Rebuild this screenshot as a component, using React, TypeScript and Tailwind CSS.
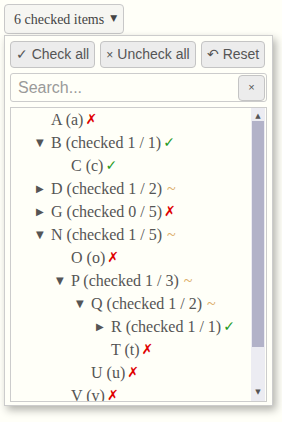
import React from "react";

type Node = {
  label: string;
  level: number;
  arrow?: "down" | "right";
  mark: "x" | "check" | "partial";
};

const rows: Node[] = [
  { label: "A (a)", level: 0, mark: "x" },
  { label: "B (checked 1 / 1)", level: 0, arrow: "down", mark: "check" },
  { label: "C (c)", level: 1, mark: "check" },
  { label: "D (checked 1 / 2)", level: 0, arrow: "right", mark: "partial" },
  { label: "G (checked 0 / 5)", level: 0, arrow: "right", mark: "x" },
  { label: "N (checked 1 / 5)", level: 0, arrow: "down", mark: "partial" },
  { label: "O (o)", level: 1, mark: "x" },
  { label: "P (checked 1 / 3)", level: 1, arrow: "down", mark: "partial" },
  { label: "Q (checked 1 / 2)", level: 2, arrow: "down", mark: "partial" },
  { label: "R (checked 1 / 1)", level: 3, arrow: "right", mark: "check" },
  { label: "T (t)", level: 3, mark: "x" },
  { label: "U (u)", level: 2, mark: "x" },
  { label: "V (v)", level: 1, mark: "x" },
];

const indent = ["pl-[25px]", "pl-[45px]", "pl-[65px]", "pl-[85px]"];

function Mark({ kind }: { kind: Node["mark"] }) {
  if (kind === "x") {
    return (
      <span className="ml-[2px] font-['DejaVu_Sans',sans-serif] text-[14px] font-bold text-[#e00000]">
        ✗
      </span>
    );
  }
  if (kind === "check") {
    return (
      <span className="ml-[2px] font-['DejaVu_Sans',sans-serif] text-[14px] font-bold text-[#1e9a1e]">
        ✓
      </span>
    );
  }
  return <span className="ml-[5px] text-[16px] text-[#dcae6a]">~</span>;
}

function Row({ node }: { node: Node }) {
  return (
    <div className={`flex h-[23px] items-center whitespace-nowrap ${indent[node.level]}`}>
      <span className="w-[15px] font-['DejaVu_Sans',sans-serif] text-[10px] text-[#555]">
        {node.arrow === "down" ? "▼" : node.arrow === "right" ? "▶" : ""}
      </span>
      <span>{node.label}</span>
      <Mark kind={node.mark} />
    </div>
  );
}

export default function App() {
  return (
    <div className="h-[422px] w-[282px] overflow-hidden bg-[#fffff8] pl-[4px] pt-[4px] font-['Liberation_Serif',serif] text-[#555]">
      <button className="flex h-[30px] items-center gap-[6px] rounded-[4px] border border-[#c8c8c8] bg-[#f6f6f2] pl-[9px] pr-[6px] text-[14px] text-[#444]">
        <span>6 checked items</span>
        <span className="font-['DejaVu_Sans',sans-serif] text-[9px]">▼</span>
      </button>

      <div className="mt-[1px] flex h-[371px] w-[269px] flex-col gap-[5px] border border-[#cccccc] bg-[#fffff8] px-[5px] pt-[5px] shadow-[3px_4px_8px_rgba(0,0,0,0.3)]">
        <div className="flex h-[27px] gap-[5px] font-['Liberation_Sans',Arial,sans-serif] text-[14px] text-[#555]">
          <button className="flex w-[85px] items-center justify-center rounded-[4px] border border-[#c4c4c4] bg-[#ececec]">
            ✓ Check all
          </button>
          <button className="flex w-[96px] items-center justify-center rounded-[4px] border border-[#c4c4c4] bg-[#ececec]">
            <span className="mr-[4px] text-[12px]">×</span>Uncheck all
          </button>
          <button className="flex w-[64px] items-center justify-center rounded-[4px] border border-[#c4c4c4] bg-[#ececec]">
            ↶ Reset
          </button>
        </div>

        <div className="flex h-[29px] items-center rounded-[3px] border border-[#cccccc] bg-[#fffff8] pr-[1px]">
          <input
            className="min-w-0 flex-1 bg-transparent pl-[7px] font-['Liberation_Sans',Arial,sans-serif] text-[16px] text-[#444] outline-none placeholder:text-[#9a9a9a]"
            placeholder="Search..."
          />
          <button className="flex h-[26px] w-[27px] items-center justify-center rounded-[4px] border border-[#c4c4c4] bg-[#ececec] font-['Liberation_Sans',Arial,sans-serif] text-[11px] text-[#555]">
            ×
          </button>
        </div>

        <div className="flex h-[295px] overflow-hidden border border-[#cccccc] bg-[#fffff8]">
          <div className="flex-1 text-[16px] leading-[23px] text-[#555]">
            {rows.map((r) => (
              <Row key={r.label} node={r} />
            ))}
          </div>
          <div className="mr-[1px] flex w-[14px] flex-col items-center bg-[#ececf2] font-['DejaVu_Sans',sans-serif] text-[7px] text-[#555]">
            <span className="mt-[4px] h-[8px] leading-[8px]">▲</span>
            <div className="mt-[1px] h-[226px] w-[12px] bg-[#b2b2c8]" />
            <div className="flex-1" />
            <span className="mb-[5px] h-[8px] leading-[8px]">▼</span>
          </div>
        </div>
      </div>
    </div>
  );
}
